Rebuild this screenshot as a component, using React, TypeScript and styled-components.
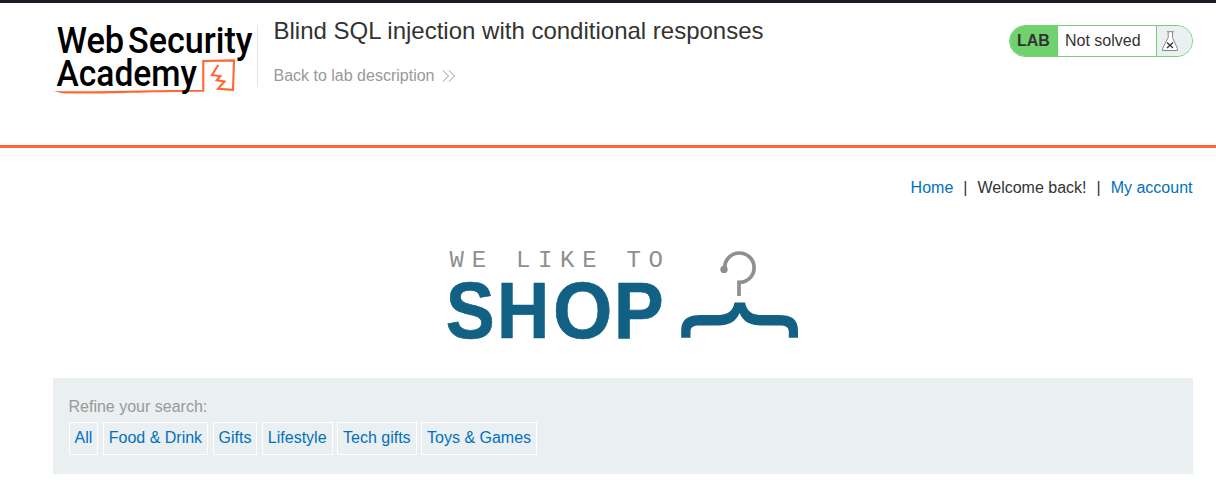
import React from "react";
import styled, { createGlobalStyle } from "styled-components";

const GlobalStyle = createGlobalStyle`
  * { box-sizing: border-box; }
  body {
    margin: 0;
    background: #fff;
    color: #333332;
    font: 16px/24px "Liberation Sans", Arial, sans-serif;
    overflow: hidden;
  }
`;

const Page = styled.div`
  height: 481px;
  overflow: hidden;
  border-top: 3px solid #1c1c28;
`;

const Header = styled.header`
  height: 145px;
  padding: 22px 23px 0 53px;
  display: flex;
  align-items: flex-start;
  border-bottom: 3px solid #ff6633;
`;

const LogoBox = styled.div`
  width: 205px;
  height: 62px;
  border-right: 1px solid #e4e4e4;
`;

const Drawing = styled.svg`
  display: block;
  overflow: visible;
`;

const TitleBlock = styled.div`
  flex: 1;
  padding-left: 15.5px;
  margin-top: -10px;
`;

const Title = styled.h2`
  margin: 0;
  font-size: 24px;
  line-height: 32px;
  font-weight: 400;
`;

const BackLink = styled.a`
  display: flex;
  align-items: center;
  gap: 8px;
  margin-top: 17px;
  line-height: 24px;
  color: #999;
`;

const Status = styled.div`
  display: flex;
  width: 184px;
  height: 32px;
  border: 1px solid #70d16f;
  border-radius: 16px;
  overflow: hidden;
  line-height: 30px;
`;

const StatusTag = styled.span`
  width: 48px;
  padding-left: 7px;
  background: #70d16f;
  font-weight: 700;
`;

const StatusText = styled.span`
  flex: 1;
  padding-left: 7px;
`;

const StatusIcon = styled.span`
  width: 36px;
  padding: 5px 0 0 4px;
  background: #eaeff1;
  border-left: 1px solid #70d16f;
`;

const Nav = styled.nav`
  display: flex;
  justify-content: flex-end;
  padding: 28px 23.5px 0 0;
  gap: 10px;
`;

const Link = styled.a`
  color: #0071bd;
`;

const Banner = styled.div`
  height: 100px;
  margin: 46px 0 32px 440px;
`;

const Filters = styled.section`
  height: 96px;
  margin: 0 23px 0 53px;
  padding: 17px 15.5px;
  background: #eaeff1;
`;

const FilterLabel = styled.div`
  color: #999;
`;

const FilterList = styled.div`
  display: flex;
  gap: 4.45px;
  margin-top: 3px;
`;

const Filter = styled.a`
  height: 33px;
  padding: 0 5px;
  border: 1px solid #fff;
  line-height: 30px;
  white-space: nowrap;
  color: #0071bd;
`;

const categories = ["All", "Food & Drink", "Gifts", "Lifestyle", "Tech gifts", "Toys & Games"];

type Letter = [char: string, x: number, width: number];

const shop: Letter[] = [
  ["S", 445.7, 49], ["H", 497.1, 52.3], ["O", 553, 59.4], ["P", 613.8, 50],
];

const AcademyLogo = () => (
  <Drawing width="204" height="72" viewBox="53 25 204 72">
    <path d="M203.3 91V61L234 60.4L233 89.8L218 88.9L224.5 81.4L216.8 80.3L220.3 76.2L212 75L218.3 65" fill="none" stroke="#ff6633" strokeWidth="2.1" />
    <path d="M53.5 91C85 92.2 140 89.6 203.8 90V91.8C150 91.8 90 94.6 62 93.2Z" fill="#ff6633" />
    <g fill="#000" fontFamily="Roboto, sans-serif" fontWeight="500" fontSize="37">
      <text x="56.7" y="53.3" textLength="67.5" lengthAdjust="spacingAndGlyphs">Web</text>
      <text x="128" y="53.3" textLength="124.5" lengthAdjust="spacingAndGlyphs">Security</text>
      <text x="56.5" y="86.2" textLength="140.5" lengthAdjust="spacingAndGlyphs">Academy</text>
    </g>
  </Drawing>
);

const ShopBanner = () => (
  <Drawing width="370" height="100" viewBox="440 246 370 100">
    <text x="449.6" y="267" fill="#8f8f8f" fontFamily='"Liberation Mono", monospace' fontSize="24" letterSpacing="7.7">WE LIKE TO</text>
    <g fill="#126184" stroke="#126184" strokeWidth=".7" fontFamily='"Liberation Sans", Arial, sans-serif' fontWeight="700" fontSize="80.5">
      {shop.map(([char, x, width]) => (
        <text key={x} x={x} y="337.8" textLength={width} lengthAdjust="spacingAndGlyphs">{char}</text>
      ))}
    </g>
    <circle cx="724" cy="269.4" r="3.7" fill="#8f8f8f" />
    <path d="M724.7 268A14.7 14.7 0 1 1 739.5 282.4H739V296" fill="none" stroke="#8f8f8f" strokeWidth="3.7" />
    <path d="M734.5 302.4H745C747 311 751 315 763 315H778C792 315 798 319 798 331V337.8H788.8V332C788.8 327 786 325.4 779 325.4H762C750 325.4 743 321.5 739.6 313C736 321.5 729 325.4 718 325.4H700C693 325.4 690.5 327 690.5 332V337.8H681.2V331C681.2 319 688 315 701 315H716C728 315 733 311 734.5 302.4Z" fill="#126184" />
  </Drawing>
);

export default function App() {
  return (
    <Page>
      <GlobalStyle />
      <Header>
        <LogoBox><AcademyLogo /></LogoBox>
        <TitleBlock>
          <Title>Blind SQL injection with conditional responses</Title>
          <BackLink>
            Back to lab description
            <svg width="14" height="12" viewBox="0 0 14 12" fill="none" stroke="#888" strokeWidth=".9">
              <path d="M1 .5L6.5 6L1 11.5M7 .5L12.5 6L7 11.5" />
            </svg>
          </BackLink>
        </TitleBlock>
        <Status>
          <StatusTag>LAB</StatusTag>
          <StatusText>Not solved</StatusText>
          <StatusIcon>
            <Drawing width="18" height="21" viewBox="0 0 18 21">
              <path d="M7.2 1V6.5L1.6 17.5V19.5H16.4V17.5L11.5 6.5V1" fill="#fff" stroke="#888" />
              <path d="M5.8 .7H12.8" stroke="#888" />
              <path d="M6 11.5L12 17M12 11.5L6 17" stroke="#333" strokeWidth="1.3" />
            </Drawing>
          </StatusIcon>
        </Status>
      </Header>
      <Nav>
        <Link>Home</Link>
        <span>|</span>
        <span>Welcome back!</span>
        <span>|</span>
        <Link>My account</Link>
      </Nav>
      <Banner><ShopBanner /></Banner>
      <Filters>
        <FilterLabel>Refine your search:</FilterLabel>
        <FilterList>
          {categories.map((name) => <Filter key={name}>{name}</Filter>)}
        </FilterList>
      </Filters>
    </Page>
  );
}
